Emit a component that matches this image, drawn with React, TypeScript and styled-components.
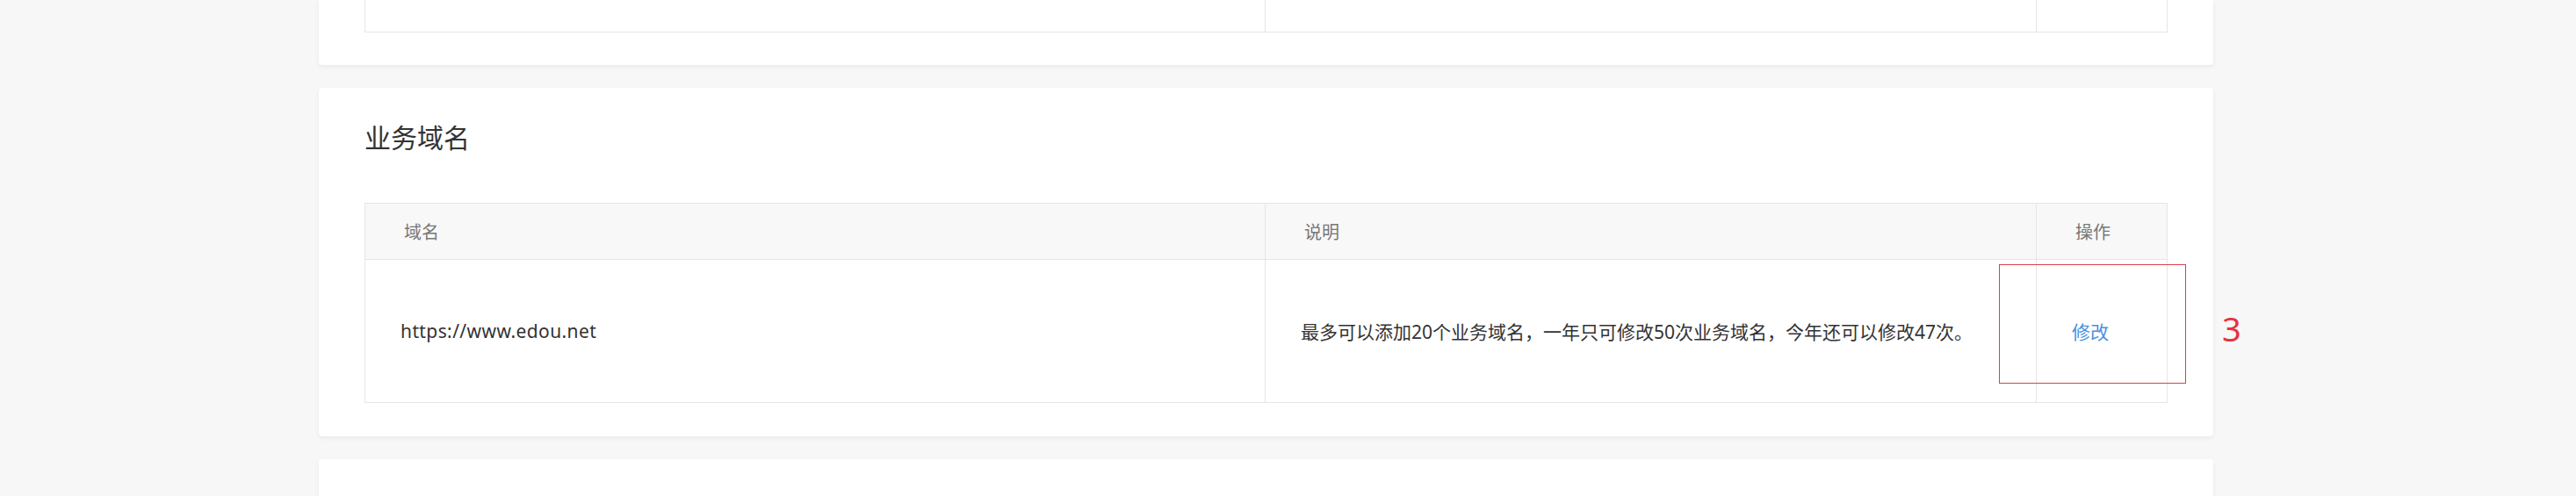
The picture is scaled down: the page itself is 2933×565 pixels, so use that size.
import styled, { createGlobalStyle } from "styled-components";

const GlobalStyle = createGlobalStyle`
  html, body {
    margin: 0;
    padding: 0;
    background: #f7f7f7;
    font-family: "Noto Sans", "Noto Sans CJK SC", sans-serif;
    overflow: hidden;
  }
`;

const Page = styled.div`
  display: flex;
  flex-direction: column;
  gap: 26px;
  padding-left: 363px;
  width: 2157px;
`;

const Card = styled.section<{ $cut?: boolean }>`
  background: #fff;
  border-radius: ${(p) => (p.$cut ? "0 0 4px 4px" : "4px")};
  box-shadow: 0 2px 5px rgba(0, 0, 0, 0.06);
  padding: ${(p) => (p.$cut ? "0 52px 37px" : "41px 52px 38px")};
`;

const Title = styled.h2`
  margin: 0 0 58px;
  font-size: 30px;
  line-height: 32px;
  font-weight: 400;
  color: #333;
`;

const Table = styled.div`
  border: 1px solid #e6e6e6;
`;

const Row = styled.div<{ $head?: boolean; $height: number }>`
  display: grid;
  grid-template-columns: 1024px 878px 1fr;
  height: ${(p) => p.$height}px;
  background: ${(p) => (p.$head ? "#f8f8f8" : "#fff")};
  border-bottom: ${(p) => (p.$head ? "1px solid #e6e6e6" : "none")};
`;

const Cell = styled.div<{ $head?: boolean; $first?: boolean }>`
  position: relative;
  display: flex;
  align-items: center;
  padding-left: ${(p) => (p.$head ? 44 : 40)}px;
  border-left: ${(p) => (p.$first ? "none" : "1px solid #e6e6e6")};
  font-size: ${(p) => (p.$head ? 20 : 21)}px;
  color: ${(p) => (p.$head ? "#777" : "#333")};
  white-space: nowrap;
`;

const Url = styled.span`
  letter-spacing: 0.4px;
`;

const EditLink = styled.a`
  color: #4a90e2;
  text-decoration: none;
  cursor: pointer;
`;

const Marker = styled.div`
  position: absolute;
  left: -43px;
  top: 5px;
  width: 211px;
  height: 134px;
  border: 1px solid #d9404c;
  pointer-events: none;
`;

const MarkerNumber = styled.span`
  position: absolute;
  left: 211px;
  top: 58px;
  font-size: 38px;
  line-height: 40px;
  color: #e5343f;
`;

export default function App() {
  return (
    <>
      <GlobalStyle />
      <Page>
        <Card $cut>
          <Table style={{ borderTop: "none" }}>
            <Row $height={36}>
              <Cell $first />
              <Cell />
              <Cell />
            </Row>
          </Table>
        </Card>

        <Card>
          <Title>业务域名</Title>
          <Table>
            <Row $head $height={63}>
              <Cell $head $first>域名</Cell>
              <Cell $head>说明</Cell>
              <Cell $head>操作</Cell>
            </Row>
            <Row $height={162}>
              <Cell $first>
                <Url>https://www.edou.net</Url>
              </Cell>
              <Cell>最多可以添加20个业务域名，一年只可修改50次业务域名，今年还可以修改47次。</Cell>
              <Cell>
                <EditLink>修改</EditLink>
                <Marker />
                <MarkerNumber>3</MarkerNumber>
              </Cell>
            </Row>
          </Table>
        </Card>

        <Card>
          <Title>消息模板推送配置</Title>
        </Card>
      </Page>
    </>
  );
}
